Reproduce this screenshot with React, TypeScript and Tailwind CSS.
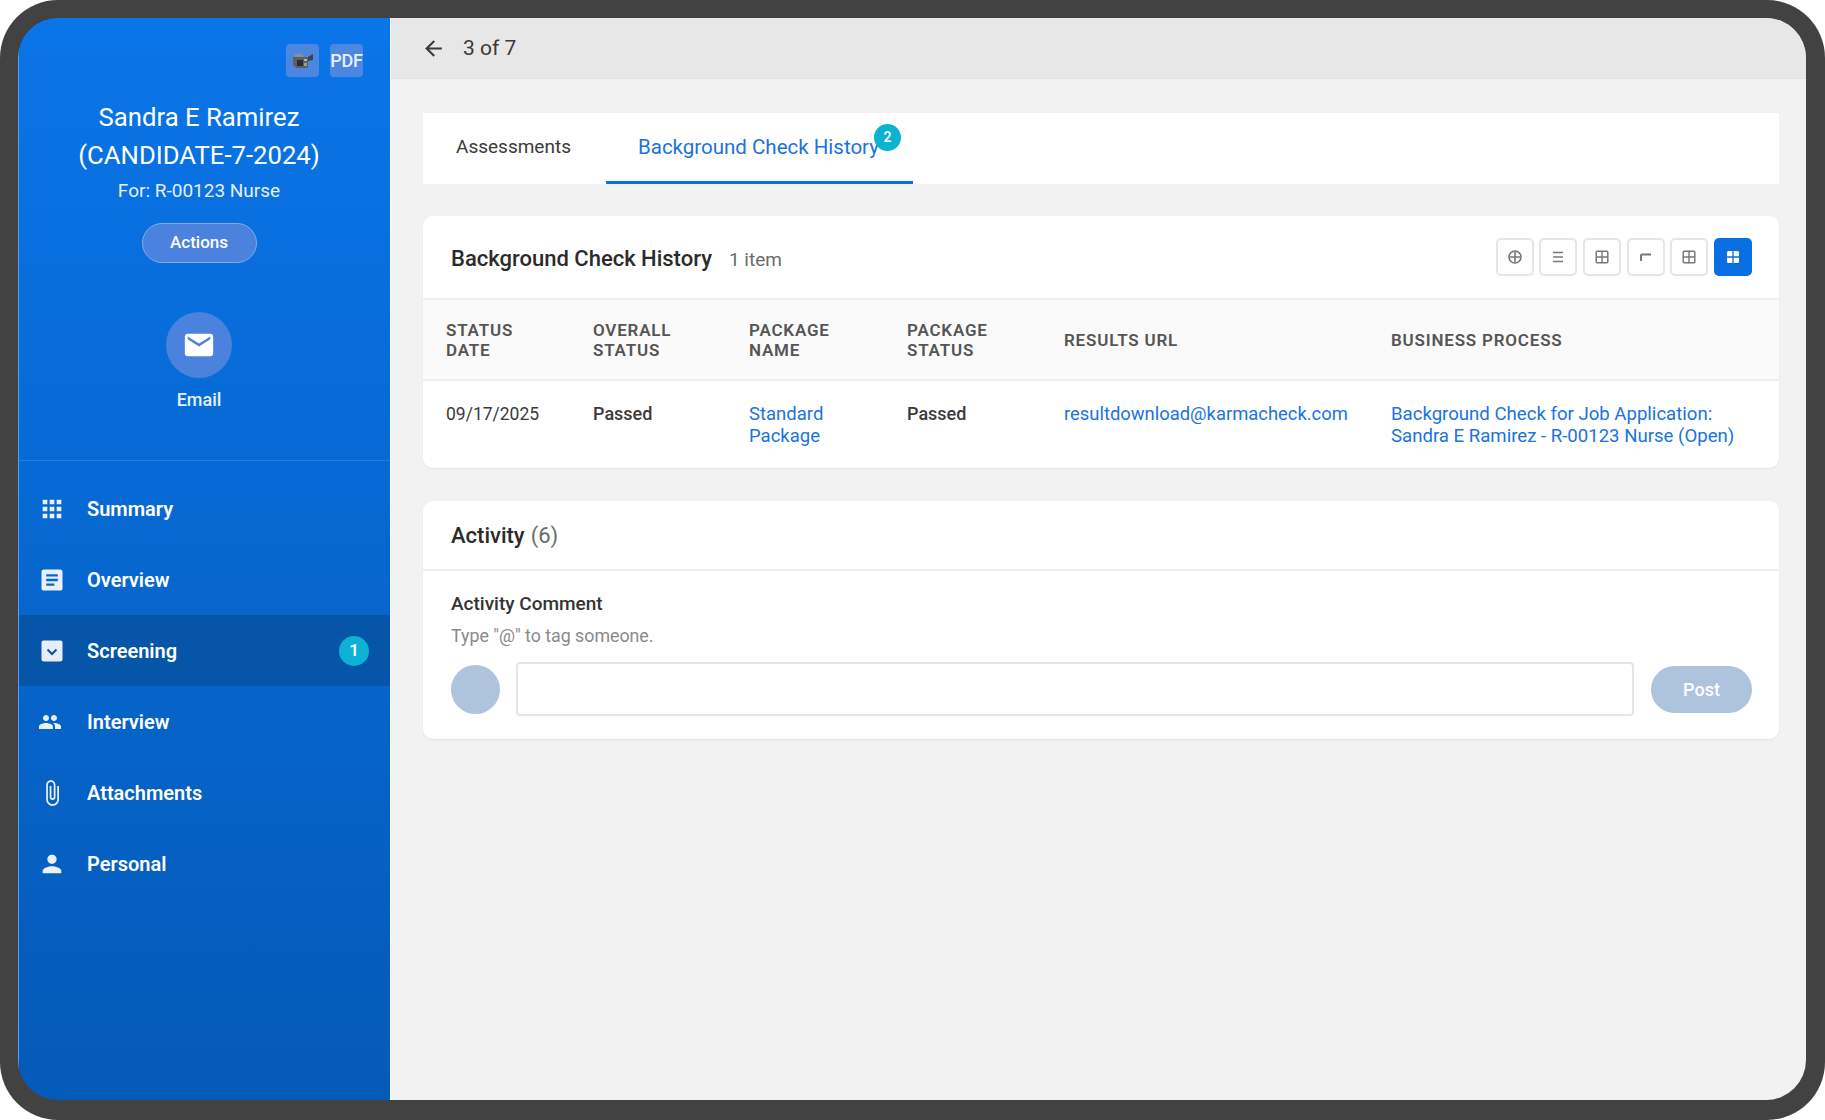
import {
  MdApps,
  MdArrowBack,
  MdArticle,
  MdEmail,
  MdOutlineAttachFile,
  MdPeople,
  MdPerson,
} from "react-icons/md";

const ScreeningIcon = ({ className }: { size?: number; className?: string }) => (
  <svg width="28" height="28" viewBox="0 0 28 28" className={className}>
    <rect x="3.5" y="3.5" width="21" height="21" rx="2" fill="#e8eef9" />
    <path d="M9.5 12.5l4.5 4.5 4.5-4.5" fill="none" stroke="#0555a8" strokeWidth="2" />
  </svg>
);

const navItems = [
  { label: "Summary", icon: MdApps, size: 28, offset: "" },
  { label: "Overview", icon: MdArticle, size: 28, offset: "" },
  { label: "Screening", icon: ScreeningIcon, size: 28, offset: "", active: true, badge: 1 },
  { label: "Interview", icon: MdPeople, size: 24, offset: "mr-[4px]" },
  { label: "Attachments", icon: MdOutlineAttachFile, size: 28, offset: "" },
  { label: "Personal", icon: MdPerson, size: 28, offset: "" },
];

const CameraIcon = () => (
  <svg width="22" height="20" viewBox="0 0 22 20">
    <path d="M1 6h15v11H4l-3-3z" fill="#5b6066" />
    <path d="M16 6l5-3v6l-5 1z" fill="#3f4347" />
    <path d="M3 3h8v3H3z" fill="#8a8f94" />
    <rect x="5" y="9" width="6" height="6" fill="#2b2d30" />
    <rect x="12" y="8" width="3" height="2" fill="#b5b8bb" />
    <rect x="12" y="12" width="3" height="3" fill="#9a9da0" />
  </svg>
);

const toolIcons = [
  <>
    <circle cx="8" cy="8" r="6" fill="none" stroke="#777" strokeWidth="1.6" />
    <path d="M8 3v10M3 8h10" stroke="#777" strokeWidth="1.6" />
  </>,
  <path d="M3 3.5h10M3 8h10M3 12.5h10" stroke="#777" strokeWidth="1.7" />,
  <>
    <rect x="2.2" y="2.2" width="11.6" height="11.6" rx="1" fill="none" stroke="#777" strokeWidth="1.5" />
    <path d="M8 3v10M3 8h10" stroke="#777" strokeWidth="1.4" />
  </>,
  <path d="M3 12V6.5a1 1 0 0 1 1-1h9" fill="none" stroke="#777" strokeWidth="1.9" />,
  <>
    <rect x="2.2" y="2.2" width="11.6" height="11.6" rx="1" fill="none" stroke="#777" strokeWidth="1.5" />
    <path d="M8 3v10M3 8h10" stroke="#777" strokeWidth="1.4" />
  </>,
];

const columns = [
  { title: ["STATUS", "DATE"], width: "w-[147px]" },
  { title: ["OVERALL", "STATUS"], width: "w-[156px]" },
  { title: ["PACKAGE", "NAME"], width: "w-[158px]" },
  { title: ["PACKAGE", "STATUS"], width: "w-[157px]" },
  { title: ["RESULTS URL"], width: "w-[327px]" },
  { title: ["BUSINESS PROCESS"], width: "w-[411px]" },
];

const Sidebar = () => (
  <aside className="flex w-[372px] shrink-0 flex-col border-l border-[#5d9ce8] bg-linear-to-b from-[#0a75e9] to-[#045ab7] text-white">
    {/* Top buttons */}
    <div className="flex justify-end gap-[11px] pr-[27px] pt-[26px]">
      <div className="flex h-[33px] w-[33px] items-center justify-center rounded-[4px] bg-[#4b87e0]">
        <CameraIcon />
      </div>
      <div className="flex h-[33px] w-[33px] items-center justify-center rounded-[4px] bg-[#4b87e0] text-[18px] font-medium tracking-[-0.3px] text-[#e8effa]">
        PDF
      </div>
    </div>

    {/* Candidate */}
    <div className="flex flex-col items-center pr-[11px]">
      <h1 className="mt-[21px] text-center text-[25.7px] leading-[38px]">
        Sandra E Ramirez
        <br />
        (CANDIDATE-7-2024)
      </h1>
      <p className="mt-[6px] text-[19px] leading-[22px] text-[#e6effb]">For: R-00123 Nurse</p>
      <button className="mt-[21px] flex h-[40px] w-[115px] items-center justify-center rounded-full border border-[#80aaea] bg-[#4b82dd] text-[17px] font-medium">
        Actions
      </button>
      <div className="mt-[49px] flex h-[66px] w-[66px] items-center justify-center rounded-full bg-[#4b82dd]">
        <MdEmail size={34} />
      </div>
      <span className="mt-[11px] text-[18px] font-medium leading-[22px] text-[#e6effb]">Email</span>
    </div>

    {/* Nav */}
    <nav className="mt-[49px] flex flex-col border-t border-[#2a7cdc] pt-[12px]">
      {navItems.map((item) => (
        <div
          key={item.label}
          className={`flex h-[71px] items-center pl-[19px] pr-[21px] ${item.active ? "bg-[#0555a8]" : ""}`}
        >
          <item.icon size={item.size} className={`shrink-0 text-[#e9f0fb] ${item.offset}`} />
          <span className="ml-[21px] flex-1 text-[20px] font-semibold">{item.label}</span>
          {item.badge && (
            <span className="flex h-[30px] w-[30px] items-center justify-center rounded-full bg-[#0bb2d4] text-[17px] font-semibold">
              {item.badge}
            </span>
          )}
        </div>
      ))}
    </nav>
  </aside>
);

const HistoryCard = () => (
  <section className="overflow-hidden rounded-[10px] bg-white shadow-[0_1px_2px_rgba(0,0,0,0.06)]">
    <div className="flex h-[82px] items-center justify-between pl-[28px] pr-[27px]">
      <div className="flex items-baseline gap-[17px] pt-[2px]">
        <h2 className="text-[22px] font-medium text-[#2b2b2b]">Background Check History</h2>
        <span className="text-[19px] text-[#6b6b6b]">1 item</span>
      </div>
      <div className="flex gap-[5.7px]">
        {toolIcons.map((icon, i) => (
          <button
            key={i}
            className="flex h-[38px] w-[38px] items-center justify-center rounded-[5px] border-2 border-[#e6e6e6] bg-white"
          >
            <svg width="16" height="16" viewBox="0 0 16 16">
              {icon}
            </svg>
          </button>
        ))}
        <button className="flex h-[38px] w-[38px] items-center justify-center rounded-[5px] bg-[#0a6fe0]">
          <svg width="16" height="16" viewBox="0 0 16 16">
            <rect x="2" y="2" width="12" height="12" rx="1.5" fill="white" />
            <path d="M8 2v12M2 8h12" stroke="#0a6fe0" strokeWidth="1.3" />
          </svg>
        </button>
      </div>
    </div>
    <table className="w-full table-fixed border-collapse">
      <thead>
        <tr className="h-[81px] border-y-2 border-[#eeeeee] bg-[#fafafa]">
          {columns.map((col) => (
            <th
              key={col.title[0] + col.title[1]}
              className={`${col.width} pl-[23px] text-left text-[17px] font-semibold leading-[20px] tracking-[0.8px] text-[#555555]`}
            >
              {col.title.map((line) => (
                <div key={line}>{line}</div>
              ))}
            </th>
          ))}
        </tr>
      </thead>
      <tbody>
        <tr className="h-[88px] align-top text-[18px] leading-[22px] text-[#3a3a3a]">
          <td className="pl-[23px] pt-[22px] text-[17.5px]">09/17/2025</td>
          <td className="pl-[23px] pt-[22px] font-medium">Passed</td>
          <td className="pl-[23px] pt-[22px] text-[18.5px] text-[#1a73e0]">
            Standard
            <br />
            Package
          </td>
          <td className="pl-[23px] pt-[22px] font-medium">Passed</td>
          <td className="pl-[23px] pt-[22px] text-[18.4px] text-[#1a73e0]">resultdownload@karmacheck.com</td>
          <td className="pl-[23px] pt-[22px] text-[18.6px] text-[#1a73e0]">
            Background Check for Job Application:
            <br />
            Sandra E Ramirez - R-00123 Nurse (Open)
          </td>
        </tr>
      </tbody>
    </table>
  </section>
);

const ActivityCard = () => (
  <section className="mt-[1px] rounded-[10px] bg-white shadow-[0_1px_2px_rgba(0,0,0,0.06)]">
    <div className="flex h-[70px] items-center border-b-2 border-[#eeeeee] pl-[28px] text-[22px]">
      <span className="font-medium text-[#2b2b2b]">Activity</span>
      <span className="ml-[6px] text-[#6b6b6b]">(6)</span>
    </div>
    <div className="pb-[23px] pl-[28px] pr-[27px] pt-[22px]">
      <p className="text-[19px] font-medium leading-[22px] text-[#333333]">Activity Comment</p>
      <p className="mt-[11px] text-[17.8px] leading-[20px] text-[#8a8a8a]">Type "@" to tag someone.</p>
      <div className="mt-[16px] flex items-center">
        <div className="h-[49px] w-[49px] shrink-0 rounded-full bg-[#aec3de]" />
        <div className="ml-[16px] h-[54px] flex-1 rounded-[4px] border-2 border-[#e6e6e6] bg-white" />
        <button className="ml-[17px] h-[47px] w-[101px] rounded-full bg-[#aec3de] text-[18px] font-medium text-white">
          Post
        </button>
      </div>
    </div>
  </section>
);

export default function App() {
  return (
    <div className="h-[1120px] w-[1825px] bg-white font-['Roboto',sans-serif]">
      <div className="h-full w-full rounded-[58px] bg-[#424242] pb-[20px] pl-[18px] pr-[19px] pt-[18px]">
        <div className="flex h-full overflow-hidden rounded-[40px]">
          <Sidebar />
          <main className="flex-1 border-l border-[#fafafa] bg-[#f2f2f2]">
            {/* Top bar */}
            <div className="flex h-[61px] items-center gap-[17px] border-b border-[#e0e0e0] bg-[#e7e7e7] pl-[30px] text-[#3a3a3a]">
              <MdArrowBack size={25} />
              <span className="pt-[2px] text-[21px]">3 of 7</span>
            </div>

            <div className="flex flex-col gap-[32px] pl-[32px] pr-[27px] pt-[34px]">
              {/* Tabs */}
              <div className="flex h-[71px] items-stretch bg-white pl-[33px]">
                <div className="flex items-center pb-[3px] text-[19px] text-[#3a3a3a]">Assessments</div>
                <div className="relative ml-[35px] flex items-center border-b-[3px] border-[#0a6fe0] pl-[32px] pr-[34px] text-[20.5px] text-[#1a73e0]">
                  Background Check History
                  <span className="absolute right-[12px] top-[11px] flex h-[27px] w-[27px] items-center justify-center rounded-full bg-[#0bb2d4] text-[14px] font-semibold text-white">
                    2
                  </span>
                </div>
              </div>

              <HistoryCard />
              <ActivityCard />
            </div>
          </main>
        </div>
      </div>
    </div>
  );
}
